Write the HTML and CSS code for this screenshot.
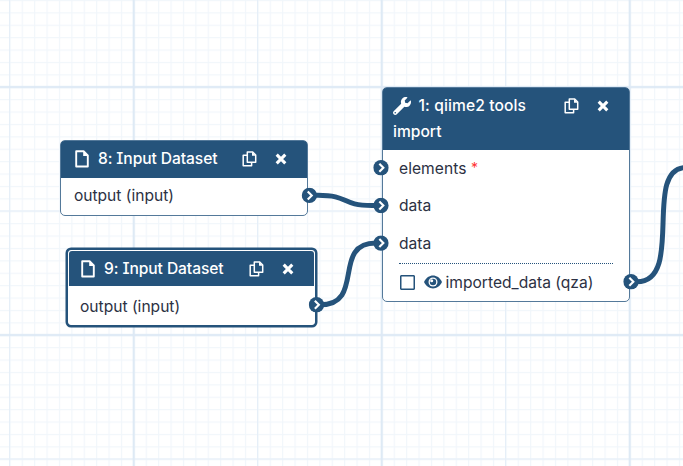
FILE: index.html
```
<!DOCTYPE html>
<html lang="en">
<head>
<meta charset="utf-8">
<title>Workflow editor</title>
<link rel="stylesheet" href="styles.css">
</head>
<body>
<svg class="symbols" aria-hidden="true">
  <symbol id="file" viewBox="0 0 14 18"><path d="M1.2 1.2H8.6L12.8 5.4V16.5H1.2Z" fill="none" stroke="currentColor" stroke-width="1.9" stroke-linejoin="round"/><path d="M8.2 1V6H13Z" fill="currentColor"/></symbol>
  <symbol id="copy" viewBox="0 0 15 16"><path d="M5.3 1H10.7L13.7 4V11.2H5.3Z" fill="none" stroke="currentColor" stroke-width="1.5" stroke-linejoin="round"/><path d="M10 .8V4.7H14Z" fill="currentColor"/><path d="M5 4.3H1.2V14.7H9.6V11.5" fill="none" stroke="currentColor" stroke-width="1.5" stroke-linejoin="round"/></symbol>
  <symbol id="close" viewBox="0 0 12 12"><path d="M1.700 1.700L10.300 10.300M10.300 1.700L1.700 10.300" fill="none" stroke="currentColor" stroke-width="3.1"/></symbol>
  <symbol id="wrench" viewBox="0 0 512 512"><path fill="currentColor" d="M507.700 109.100c-2.200-9-13.500-12.100-20.100-5.500l-74.400 74.400-67.900-11.300L334 98.900l74.400-74.400c6.600-6.600 3.400-17.900-5.700-20.200-47.400-11.700-99.600.9-136.600 37.900-39.600 39.600-50.500 97.100-34.100 147.200L18.700 402.800c-25 25-25 65.500 0 90.500s65.500 25 90.500 0l213.200-213.200c50.100 16.700 107.500 5.700 147.400-34.200 37.100-37.100 49.700-89.300 37.900-136.800zM64 472c-13.200 0-24-10.800-24-24s10.700-24 24-24 24 10.700 24 24-10.700 24-24 24z"/></symbol>
  <symbol id="eye" viewBox="0 0 18 14"><path d="M0 7C4-1.600 14-1.600 18 7C14 15.600 4 15.600 0 7Z" fill="currentColor"/><circle cx="9" cy="7" r="4.500" fill="#fff"/><circle cx="9" cy="7" r="3.200" fill="currentColor"/><circle cx="7.700" cy="5.700" r="1.500" fill="#fff"/></symbol>
  <symbol id="port" viewBox="0 0 16 16"><circle cx="8" cy="8" r="7.900" fill="currentColor"/><path d="M6.300 3.900L10.400 8L6.300 12.100" fill="none" stroke="#fff" stroke-width="2.200"/></symbol>
</svg>
<main class="canvas">
  <svg class="grid" width="683" height="466">
    <defs>
      <pattern id="minor" x="9.300" y="12.300" width="12.400" height="12.400" patternUnits="userSpaceOnUse"><path d="M.6 0V12.400M0 .6H12.400"/></pattern>
      <pattern id="medium" x="9" y="86.400" width="124" height="124" patternUnits="userSpaceOnUse"><path d="M.6 0V124M0 .6H124"/></pattern>
      <pattern id="major" x="132.600" y="85.800" width="248" height="248" patternUnits="userSpaceOnUse"><path d="M1.200 0V248M0 1.200H248"/></pattern>
    </defs>
    <rect width="683" height="466" fill="url(#minor)"/>
    <rect width="683" height="466" fill="url(#medium)"/>
    <rect width="683" height="466" fill="url(#major)"/>
  </svg>

  <section class="node dataset">
    <header><svg class="file"><use href="#file"/></svg><span class="title">8: Input Dataset</span><svg class="copy"><use href="#copy"/></svg><svg class="close"><use href="#close"/></svg></header>
    <div class="output">output (input)</div>
  </section>

  <section class="node dataset active">
    <header><svg class="file"><use href="#file"/></svg><span class="title">9: Input Dataset</span><svg class="copy"><use href="#copy"/></svg><svg class="close"><use href="#close"/></svg></header>
    <div class="output">output (input)</div>
  </section>

  <section class="node tool">
    <header>
      <div class="line"><svg class="wrench"><use href="#wrench"/></svg><span class="title">1: qiime2 tools</span><svg class="copy"><use href="#copy"/></svg><svg class="close"><use href="#close"/></svg></div>
      <div>import</div>
    </header>
    <div class="rows">
      <div class="row elements">elements <span class="required">*</span></div>
      <div class="row">data</div>
      <div class="row">data</div>
      <div class="result"><span class="box"></span><svg class="eye"><use href="#eye"/></svg><span class="name">imported_data (qza)</span></div>
    </div>
  </section>

  <svg class="links" width="683" height="466">
    <path d="M310 195.300H318C350 195.300 340 205.400 372 205.400H380"/>
    <path d="M316 304.800H320C366 304.800 331 243 376 243H380"/>
    <path d="M630.500 281.800H637C685 281.800 642 167.500 686 167.500"/>
    <g class="ports">
      <use href="#port" x="301.600" y="187.600" width="15.600" height="15.600"/>
      <use href="#port" x="308.700" y="297" width="15.600" height="15.600"/>
      <use href="#port" x="373.200" y="160" width="15.600" height="15.600"/>
      <use href="#port" x="373.200" y="197.700" width="15.600" height="15.600"/>
      <use href="#port" x="373.200" y="235.300" width="15.600" height="15.600"/>
      <use href="#port" x="623.200" y="274" width="15.600" height="15.600"/>
    </g>
  </svg>
</main>
</body>
</html>
```
FILE: styles.css
```
* { box-sizing: border-box; }
body { margin: 0; font: 15.6px/26px Inter, "Noto Sans", sans-serif; font-feature-settings: "cv08" 1; color: #2c3143; }
svg { display: block; flex: none; }
.symbols { position: absolute; width: 0; height: 0; }
.canvas { position: relative; width: 683px; height: 466px; overflow: hidden; background: #fff; }
.grid path { fill: none; stroke: #f1f6fb; stroke-width: 1.2; }
#medium path { stroke: #e6eff8; }
#major path { stroke: #dde9f5; stroke-width: 2; }
.grid, .links { position: absolute; left: 0; top: 0; }
.links path { fill: none; stroke: #25537b; stroke-width: 5; }
.ports { color: #25537b; }
.node { position: absolute; background: #fff; border: 1px solid #54799a; border-radius: 5px; }
.node header { background: #25537b; color: #fff; font-weight: 500; border-radius: 3px 3px 0 0; }
.title { white-space: nowrap; }
.dataset { left: 60.4px; top: 140px; width: 248px; height: 76px; }
.dataset header { display: flex; align-items: center; height: 36.500px; padding: 0 19px 1.500px 13.500px; }
.dataset .title { width: 120px; margin-left: 9px; margin-right: 24.500px; letter-spacing: -.08px; }
.file { width: 14px; height: 18px; }
.copy { width: 15px; height: 16px; }
.close { width: 12px; height: 12px; margin-left: 18px; }
.output { padding: 5.500px 12.5px; }
.active { left: 68px; top: 250px; width: 247px; height: 75px; border-color: #fff; border-radius: 3px; box-shadow: 0 0 0 2.5px #25537b; }
.active header { height: 35px; padding: 0 19px 0 12px; }
.active .output { padding: 8px 11px; }
.tool { left: 381.500px; top: 87px; width: 248px; height: 215px; }
.tool header { height: 62px; padding: 5px 0 0 10.500px; }
.line { display: flex; align-items: center; }
.line .wrench, .line .copy, .line .close { margin-top: -1px; }
.wrench { width: 18px; height: 18px; }
.tool .title { width: 120px; margin-left: 7.500px; margin-right: 25px; letter-spacing: .1px; }
.line .close { margin-left: 18px; }
.rows { padding: 0 16px 0 16.500px; }
.row { height: 37.600px; padding-top: 5.600px; }
.elements { letter-spacing: .05px; }
.required { color: #f33; font-size: 14px; position: relative; top: -1px; }
.result { display: flex; align-items: center; height: 38px; border-top: 1px dotted #25537b; }
.box { width: 15px; height: 15px; margin-left: .5px; border: 1px solid #25537b; box-shadow: inset 0 0 0 .5px #25537b; border-radius: 1px; flex: none; }
.eye { width: 18px; height: 14px; color: #25537b; margin: 0 3.5px 0 9.500px; }
.name { white-space: nowrap; position: relative; top: 1px; }
```
